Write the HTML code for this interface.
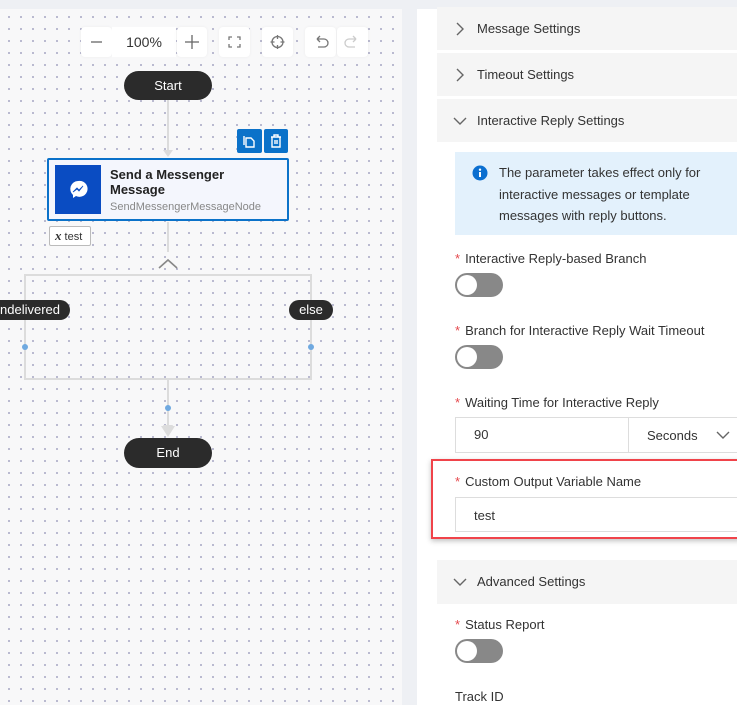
<!DOCTYPE html>
<html><head><style>
*{margin:0;padding:0;box-sizing:border-box}
body{width:737px;height:705px;overflow:hidden;background:#fff;font-family:"Liberation Sans",sans-serif;position:relative;color:#333}
.a{position:absolute}
#canvas{left:0;top:9px;width:402px;height:696px;background-color:#f8f8f9;background-image:radial-gradient(circle,#a9a9c4 0.8px,transparent 1.1px);background-size:12px 12px;background-position:3px 2px}
.tb{background:#fff;border-radius:4px;height:30px;top:27px;box-shadow:0 0 3px rgba(0,0,0,.05)}
.pill{background:#2b2b2b;color:#fff;font-size:13px;text-align:center;border-radius:15px}
.sec{left:437px;width:300px;height:43px;background:#f5f5f5;font-size:13px;color:#333;line-height:43px;padding-left:40px}
.sec svg{position:absolute;left:18px;top:15px}
.lbl{left:455px;font-size:13px;color:#333}
.lbl b{color:#e5484d;font-weight:normal;margin-right:5px}
.tog{left:455px;width:48px;height:24px;border-radius:12px;background:#888}
.tog::after{content:"";position:absolute;left:2px;top:2px;width:20px;height:20px;border-radius:50%;background:#fff}
.inp{border:1px solid #ddd;background:#fff;font-size:13px;color:#333;padding-left:18px}
</style></head><body>
<div class="a" style="left:0;top:0;width:737px;height:9px;background:#eef0f4"></div>
<div class="a" style="left:402px;top:0;width:15px;height:705px;background:#eef0f4"></div>
<div id="canvas" class="a"></div>
<!-- toolbar -->
<div class="a tb" style="left:81px;width:31px"><svg width="31" height="30"><path d="M10 15h11" stroke="#666" stroke-width="1.3"/></svg></div>
<div class="a" style="left:112px;top:27px;width:64px;height:30px;line-height:30px;text-align:center;font-size:14px;color:#333;background:#fff">100%</div>
<div class="a tb" style="left:177px;width:30px"><svg width="30" height="30"><path d="M8 15h14M15 8v14" stroke="#666" stroke-width="1.3"/></svg></div>
<div class="a tb" style="left:219px;width:31px"><svg width="31" height="30"><path d="M10 13v-3h3M18 10h3v3M21 17v3h-3M13 20h-3v-3" stroke="#777" stroke-width="1.3" fill="none"/></svg></div>
<div class="a tb" style="left:262px;width:31px"><svg width="31" height="30"><circle cx="15.5" cy="15" r="5.5" stroke="#777" stroke-width="1.3" fill="none"/><path d="M15.5 8v4M15.5 18v4M8.5 15h4M18.5 15h4" stroke="#777" stroke-width="1.3"/></svg></div>
<div class="a tb" style="left:305px;width:31px"><svg width="31" height="30"><path d="M12 12h7a4 4 0 0 1 0 8h-6M12 12l3-3M12 12l3 3" stroke="#777" stroke-width="1.3" fill="none"/></svg></div>
<div class="a tb" style="left:337px;width:31px"><svg width="31" height="30"><path d="M19 12h-7a4 4 0 0 0 0 8h6M19 12l-3-3M19 12l-3 3" stroke="#ccc" stroke-width="1.3" fill="none"/></svg></div>
<!-- lines -->
<svg class="a" style="left:0;top:0" width="402" height="705">
<path d="M168 100v52M168 222v30M168 379v46M25 275h286v104H25z" stroke="#dcdcdc" stroke-width="2" fill="none"/>
<path d="M163 150h10l-5 7z" fill="#dcdcdc"/>
<path d="M163 425h10l-5 11z M161 426h14l-7 11z" fill="#dcdcdc"/>
<path d="M159 268l9-8 9 8" stroke="#888" stroke-width="1.6" fill="none"/>
<circle cx="25" cy="347" r="3" fill="#6fa9e0"/><circle cx="311" cy="347" r="3" fill="#6fa9e0"/><circle cx="168" cy="408" r="3" fill="#6fa9e0"/>
</svg>
<div class="a pill" style="left:124px;top:71px;width:88px;height:29px;line-height:29px">Start</div>
<div class="a pill" style="left:124px;top:438px;width:88px;height:30px;line-height:30px">End</div>
<div class="a pill" style="left:-10px;top:300px;width:80px;height:20px;line-height:20px;border-radius:10px">ndelivered</div>
<div class="a pill" style="left:289px;top:300px;width:44px;height:20px;line-height:20px;border-radius:10px">else</div>
<!-- node -->
<div class="a" style="left:237px;top:129px;width:25px;height:24px;background:#0b72c9;border-radius:2px"><svg width="25" height="24"><path d="M9 9h5l3 3v6H9z M7 7v9" stroke="#fff" stroke-width="1.4" fill="none"/></svg></div>
<div class="a" style="left:264px;top:129px;width:24px;height:24px;background:#0b72c9;border-radius:2px"><svg width="24" height="24"><path d="M7 8h10M10 8V6h4v2M8 8v10h8V8M11 11v4M13 11v4" stroke="#fff" stroke-width="1.4" fill="none"/></svg></div>
<div class="a" style="left:47px;top:158px;width:242px;height:63px;border:2px solid #0b72c9;background:#f4f6fd;border-radius:2px">
<div class="a" style="left:6px;top:5px;width:46px;height:49px;background:#0a4cc2"><svg width="46" height="49"><path d="M23 16a8 8 0 0 0-5 14l0 3 3-2a8 8 0 1 0 2-15z" fill="#fff"/><path d="M18 27l4-4 2 2 4-4-4 5-2-2z" fill="#0a4cc2" stroke="#0a4cc2" stroke-width=".8"/></svg></div>
<div class="a" style="left:61px;top:7px;font-size:13px;font-weight:bold;color:#222;line-height:15px">Send a Messenger<br>Message</div>
<div class="a" style="left:61px;top:41px;font-size:11px;color:#888">SendMessengerMessageNode</div>
</div>
<div class="a" style="left:49px;top:226px;width:42px;height:20px;border:1px solid #bbb;background:#fff;border-radius:2px;font-size:11px;line-height:18px;padding-left:5px;color:#333"><i style="font-family:'Liberation Serif';font-weight:bold;font-size:13px">x</i> test</div>
<!-- panel -->
<div class="a sec" style="top:7px"><svg width="10" height="14"><path d="M2 1l6 6-6 6" stroke="#666" stroke-width="1.4" fill="none"/></svg>Message Settings</div>
<div class="a sec" style="top:53px"><svg width="10" height="14"><path d="M2 1l6 6-6 6" stroke="#666" stroke-width="1.4" fill="none"/></svg>Timeout Settings</div>
<div class="a sec" style="top:99px"><svg width="14" height="10" style="top:17px;left:16px"><path d="M1 2l6 6 6-6" stroke="#666" stroke-width="1.4" fill="none"/></svg>Interactive Reply Settings</div>
<div class="a" style="left:455px;top:152px;width:282px;height:83px;background:#e3f1fc"></div>
<svg class="a" style="left:472px;top:165px" width="16" height="16"><circle cx="8" cy="8" r="7.5" fill="#0b6fd0"/><rect x="7" y="7" width="2" height="5" fill="#fff"/><circle cx="8" cy="4.7" r="1.2" fill="#fff"/></svg>
<div class="a" style="left:499px;top:162px;font-size:13px;line-height:21.5px;color:#333">The parameter takes effect only for<br>interactive messages or template<br>messages with reply buttons.</div>
<div class="a lbl" style="top:251px"><b>*</b>Interactive Reply-based Branch</div>
<div class="a tog" style="top:273px"></div>
<div class="a lbl" style="top:323px"><b>*</b>Branch for Interactive Reply Wait Timeout</div>
<div class="a tog" style="top:345px"></div>
<div class="a lbl" style="top:395px"><b>*</b>Waiting Time for Interactive Reply</div>
<div class="a inp" style="left:455px;top:417px;width:174px;height:36px;line-height:34px">90</div>
<div class="a inp" style="left:628px;top:417px;width:115px;height:36px;line-height:36px;padding-left:18px">Seconds<svg width="14" height="10" style="position:absolute;left:87px;top:12px"><path d="M1 2l6 6 6-6" stroke="#666" stroke-width="1.4" fill="none"/></svg></div>
<div class="a" style="left:431px;top:459px;width:310px;height:80px;border:2px solid #f0434a;box-shadow:0 2px 5px rgba(0,0,0,.25)"></div>
<div class="a lbl" style="top:474px"><b>*</b>Custom Output Variable Name</div>
<div class="a inp" style="left:455px;top:497px;width:290px;height:35px;line-height:35px">test</div>
<div class="a sec" style="top:560px;height:44px;line-height:44px"><svg width="14" height="10" style="top:17px;left:16px"><path d="M1 2l6 6 6-6" stroke="#666" stroke-width="1.4" fill="none"/></svg>Advanced Settings</div>
<div class="a lbl" style="top:617px"><b>*</b>Status Report</div>
<div class="a tog" style="top:639px"></div>
<div class="a lbl" style="top:689px">Track ID</div>
</body></html>
